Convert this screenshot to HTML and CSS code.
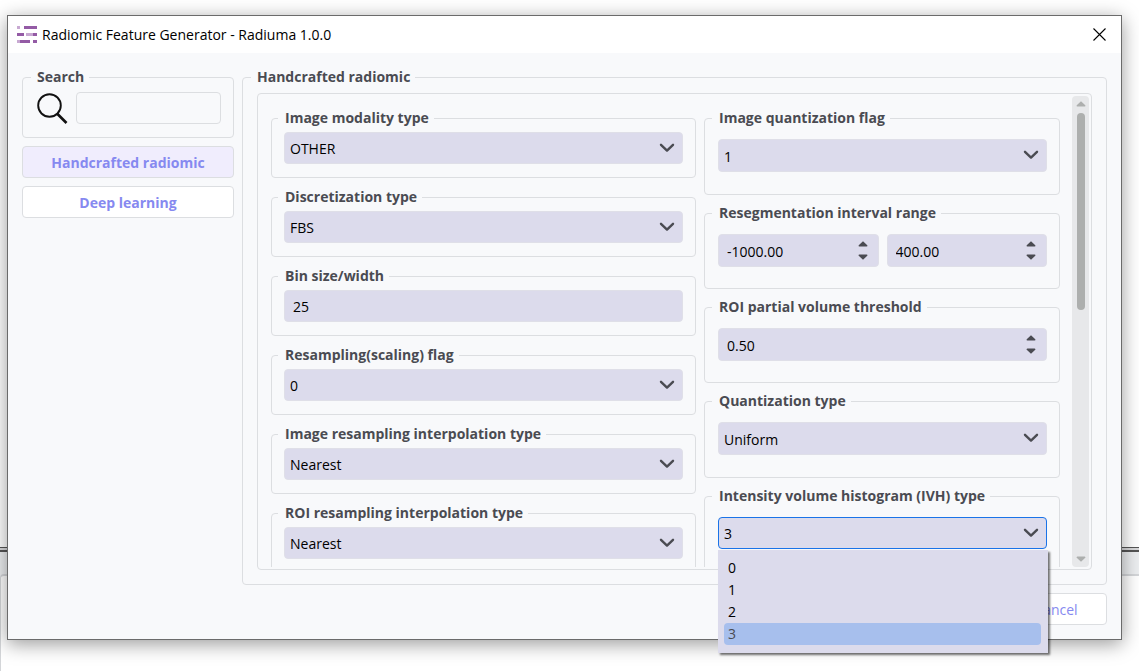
FILE: index.html
```html
<!DOCTYPE html>
<html lang="en">
<head>
<meta charset="utf-8">
<title>Radiomic Feature Generator - Radiuma 1.0.0</title>
<link rel="stylesheet" href="styles.css">
</head>
<body>
<svg width="0" height="0" class="symbols" aria-hidden="true">
  <symbol id="chevron" viewBox="0 0 16 10"><path d="M2 1.800 8 7.600 14 1.800" fill="none" stroke="currentColor" stroke-width="2.400" stroke-linecap="round" stroke-linejoin="round"/></symbol>
  <symbol id="up" viewBox="0 0 10 6"><path d="M5 0.200 9.300 4.300Q9.800 5.500 8.600 5.600H1.400Q.2 5.500.7 4.300Z" fill="currentColor"/></symbol>
  <symbol id="down" viewBox="0 0 10 6"><path d="M5 5.800.7 1.700Q.2.500 1.400.4H8.600Q9.800.500 9.300 1.700Z" fill="currentColor"/></symbol>
</svg>
<div class="backdrop" aria-hidden="true"><div class="backdrop-strip"></div><div class="backdrop-pane"></div></div>
<main class="window">
  <header class="titlebar">
    <svg class="app-icon" width="20" height="17" viewBox="0 0 20 17" aria-hidden="true">
      <g fill="#945ba5"><path d="M7 0h13v3H7zM0 7h7v3H0zM16 7h4v3h-4zM3 14h10v3H3zM16 14h4v3h-4z"/></g>
      <g fill="#c8a9d2"><path d="M0 0h3v3H0zM9 7h7v3H9zM0 14h3v3H0z"/></g>
    </svg>
    <h1 class="title">Radiomic Feature Generator - Radiuma 1.0.0</h1>
    <button class="close" type="button" aria-label="Close"><svg width="13" height="13" viewBox="0 0 13 13"><path d="M.5.5l12 12M12.500.5l-12 12" stroke="#000" stroke-width="1.100"/></svg></button>
  </header>
  <div class="body">
    <div class="columns">
      <aside class="sidebar">
        <fieldset class="group search">
          <legend>Search</legend>
          <div class="search-row">
            <svg width="31" height="31" viewBox="0 0 31 31" aria-hidden="true"><g fill="none" stroke="#111"><circle cx="12.500" cy="12.500" r="11.300" stroke-width="1.900"/><path d="M20 20.500 29.500 30" stroke-width="2.600"/></g></svg>
            <input class="search-input" type="text" aria-label="Search">
          </div>
        </fieldset>
        <button class="tab tab-active" type="button">Handcrafted radiomic</button>
        <button class="tab" type="button">Deep learning</button>
      </aside>
      <fieldset class="group features">
        <legend>Handcrafted radiomic</legend>
        <div class="panel">
          <div class="scroll-area">
            <div class="column">
              <fieldset class="group field">
                <legend><label for="modality">Image modality type</label></legend>
                <div class="combo"><select id="modality"><option>OTHER</option></select><svg width="16" height="10"><use href="#chevron"/></svg></div>
              </fieldset>
              <fieldset class="group field">
                <legend><label for="discretization">Discretization type</label></legend>
                <div class="combo"><select id="discretization"><option>FBS</option></select><svg width="16" height="10"><use href="#chevron"/></svg></div>
              </fieldset>
              <fieldset class="group field">
                <legend><label for="bin">Bin size/width</label></legend>
                <input class="text" id="bin" type="text" value="25">
              </fieldset>
              <fieldset class="group field">
                <legend><label for="resampling">Resampling(scaling) flag</label></legend>
                <div class="combo"><select id="resampling"><option>0</option></select><svg width="16" height="10"><use href="#chevron"/></svg></div>
              </fieldset>
              <fieldset class="group field">
                <legend><label for="image-interp">Image resampling interpolation type</label></legend>
                <div class="combo"><select id="image-interp"><option>Nearest</option></select><svg width="16" height="10"><use href="#chevron"/></svg></div>
              </fieldset>
              <fieldset class="group field">
                <legend><label for="roi-interp">ROI resampling interpolation type</label></legend>
                <div class="combo"><select id="roi-interp"><option>Nearest</option></select><svg width="16" height="10"><use href="#chevron"/></svg></div>
              </fieldset>
            </div>
            <div class="column column-tall">
              <fieldset class="group field">
                <legend><label for="quant-flag">Image quantization flag</label></legend>
                <div class="combo"><select id="quant-flag"><option>1</option></select><svg width="16" height="10"><use href="#chevron"/></svg></div>
              </fieldset>
              <fieldset class="group field">
                <legend>Resegmentation interval range</legend>
                <div class="range">
                  <div class="spin"><input type="text" value="-1000.00" aria-label="Interval minimum"><div class="steps"><button type="button" aria-label="Increase"><svg width="10" height="6"><use href="#up"/></svg></button><button type="button" aria-label="Decrease"><svg width="10" height="6"><use href="#down"/></svg></button></div></div>
                  <div class="spin"><input type="text" value="400.00" aria-label="Interval maximum"><div class="steps"><button type="button" aria-label="Increase"><svg width="10" height="6"><use href="#up"/></svg></button><button type="button" aria-label="Decrease"><svg width="10" height="6"><use href="#down"/></svg></button></div></div>
                </div>
              </fieldset>
              <fieldset class="group field">
                <legend><label for="threshold">ROI partial volume threshold</label></legend>
                <div class="spin"><input id="threshold" type="text" value="0.50"><div class="steps"><button type="button" aria-label="Increase"><svg width="10" height="6"><use href="#up"/></svg></button><button type="button" aria-label="Decrease"><svg width="10" height="6"><use href="#down"/></svg></button></div></div>
              </fieldset>
              <fieldset class="group field">
                <legend><label for="quant-type">Quantization type</label></legend>
                <div class="combo"><select id="quant-type"><option>Uniform</option></select><svg width="16" height="10"><use href="#chevron"/></svg></div>
              </fieldset>
              <fieldset class="group field">
                <legend><label for="ivh">Intensity volume histogram (IVH) type</label></legend>
                <div class="combo combo-open"><select id="ivh"><option>3</option></select><svg width="16" height="10"><use href="#chevron"/></svg></div>
              </fieldset>
            </div>
          </div>
          <div class="scrollbar" aria-hidden="true">
            <svg width="10" height="6"><use href="#up"/></svg>
            <div class="track"><div class="thumb"></div></div>
            <svg width="10" height="6"><use href="#down"/></svg>
          </div>
        </div>
      </fieldset>
    </div>
    <footer class="actions"><button class="cancel" type="button">Cancel</button></footer>
  </div>
  <ul class="popup" role="listbox" aria-label="Intensity volume histogram (IVH) type">
    <li role="option">0</li>
    <li role="option">1</li>
    <li role="option">2</li>
    <li class="selected" role="option" aria-selected="true">3</li>
  </ul>
</main>
</body>
</html>
```
FILE: styles.css
```css
* { box-sizing: border-box; }

body {
  margin: 0;
  height: 100vh;
  display: flex;
  padding: 15px 17px 31px 7px;
  overflow: hidden;
  background: #fff;
  color: #000;
  font: 14px/20px "Open Sans", "Noto Sans", sans-serif;
}

button, input, select { font: inherit; color: inherit; margin: 0; }
svg { display: block; }
.symbols { position: absolute; }

/* Application window that shows behind the dialog */
.backdrop {
  position: absolute;
  inset: 547px 0 0;
  display: flex;
  flex-direction: column;
  background: #eceef0;
}
.backdrop-strip {
  height: 5px;
  border: solid #555;
  border-width: 1px 0 2px;
  background: #d8d8da;
}
.backdrop-pane {
  flex: 1;
  margin-top: 22px;
  border: solid #d4d6d9;
  border-width: 2px 0 0 1px;
  border-radius: 4px 0 0;
  background: #fff;
}

.window {
  position: relative;
  flex: 1;
  min-width: 0;
  display: flex;
  flex-direction: column;
  border: 1px solid #6b6b6b;
  background: #f8f9fb;
  box-shadow: 0 4px 18px rgba(0, 0, 0, .4);
}

.titlebar {
  display: flex;
  align-items: center;
  height: 37px;
  padding: 0 15px 0 9px;
  background: #fff;
}
.title {
  flex: 1;
  margin: 0 0 0 5px;
  font-size: 14px;
  font-weight: 400;
}
.close { padding: 0; border: 0; background: none; }

.body {
  flex: 1;
  min-height: 0;
  display: flex;
  flex-direction: column;
  gap: 8px;
  padding: 14px;
}
.columns {
  flex: 1;
  min-height: 0;
  display: flex;
  gap: 8px;
}
.sidebar {
  width: 212px;
  display: flex;
  flex-direction: column;
  gap: 8px;
}

.group {
  min-width: 0;
  margin: 0;
  border: 1px solid #dcdee1;
  border-radius: 4px;
}
.group > legend {
  margin-left: -6px;
  padding: 0 5px 0 6px;
  color: #4a4b52;
  font-weight: 700;
}

.search { padding: 5px 12px 13px 14px; }
.search-row { display: flex; align-items: center; gap: 8px; }
.search-input {
  flex: 1;
  min-width: 0;
  height: 32px;
  padding: 0 8px;
  border: 1px solid #dcdee1;
  border-radius: 4px;
  background: #f8f9fb;
}

.tab, .cancel {
  height: 32px;
  padding: 2px 8px 0;
  border: 1px solid #dcdee1;
  border-radius: 4px;
  background: #fff;
  color: #8689f0;
}
.tab { font-weight: 700; }
.tab-active { background: #f0edfd; }

.features {
  flex: 1;
  display: flex;
  flex-direction: column;
  padding: 6px 14px 14px;
}
.panel {
  height: 100%;
  display: flex;
  padding: 2px;
  border: 1px solid #dcdee1;
  border-radius: 4px;
}
.scroll-area {
  flex: 1;
  min-width: 0;
  display: grid;
  grid-template-columns: minmax(0, 425fr) minmax(0, 356fr);
  align-items: start;
  gap: 8px;
  padding: 12px 12px 0 11px;
  overflow: hidden;
}
.column { display: flex; flex-direction: column; gap: 9px; }
.column-tall { gap: 8px; }

.field { padding: 4px 12px 13px; }
.field > legend { padding-left: 7px; }
.column-tall .field { padding: 11px 12px 21px 13px; }
.column-tall .combo { padding-bottom: 1px; }

.combo { position: relative; color: #4a4b52; }
.combo svg {
  position: absolute;
  right: 8px;
  top: 11px;
  pointer-events: none;
}
.combo select, .text, .spin {
  display: block;
  width: 100%;
  height: 32px;
  border: 1px solid #dfdfe8;
  border-radius: 4px;
  background: #dcdbec;
}
.column-tall select, .column-tall .spin { height: 33px; }
.combo select {
  appearance: none;
  padding: 2px 32px 0 5px;
  color: #000;
  outline: 0;
}
.column-tall .combo-open select { border-color: #1a73e8; height: 32px; }
.text { padding: 0 8px; }

.range { display: flex; gap: 8px; }
.column-tall .spin { display: flex; align-items: center; min-width: 0; padding-right: 10px; }
.spin input {
  flex: 1;
  min-width: 0;
  height: 100%;
  padding: 2px 8px 0;
  border: 0;
  background: none;
}
.steps { display: flex; flex-direction: column; gap: 7px; }
.steps button {
  padding: 0;
  border: 0;
  background: none;
  color: #4a4b52;
}

/* Open list of the IVH combo, hanging over the window's lower edge */
.popup {
  position: absolute;
  right: 73px;
  bottom: -14px;
  width: 330px;
  margin: 0;
  padding: 7px 7px 8px 6px;
  list-style: none;
  background: #dcdbec;
  box-shadow: 2px 2px 2px rgba(0, 0, 0, .55);
}
.popup li { padding: 1px 4px; border-radius: 4px; }
.popup .selected { background: #a7bfed; color: #4a4b52; }

.scrollbar {
  width: 17px;
  display: flex;
  flex-direction: column;
  align-items: center;
  gap: 6px;
  padding: 5px 0;
  border-radius: 4px;
  background: #e7e8ea;
  color: #adafae;
}
.track { flex: 1; }
.thumb {
  width: 8px;
  height: 45%;
  border-radius: 4px;
  background: #adafae;
}

.actions { display: flex; justify-content: flex-end; }
.cancel { width: 102px; }
```
